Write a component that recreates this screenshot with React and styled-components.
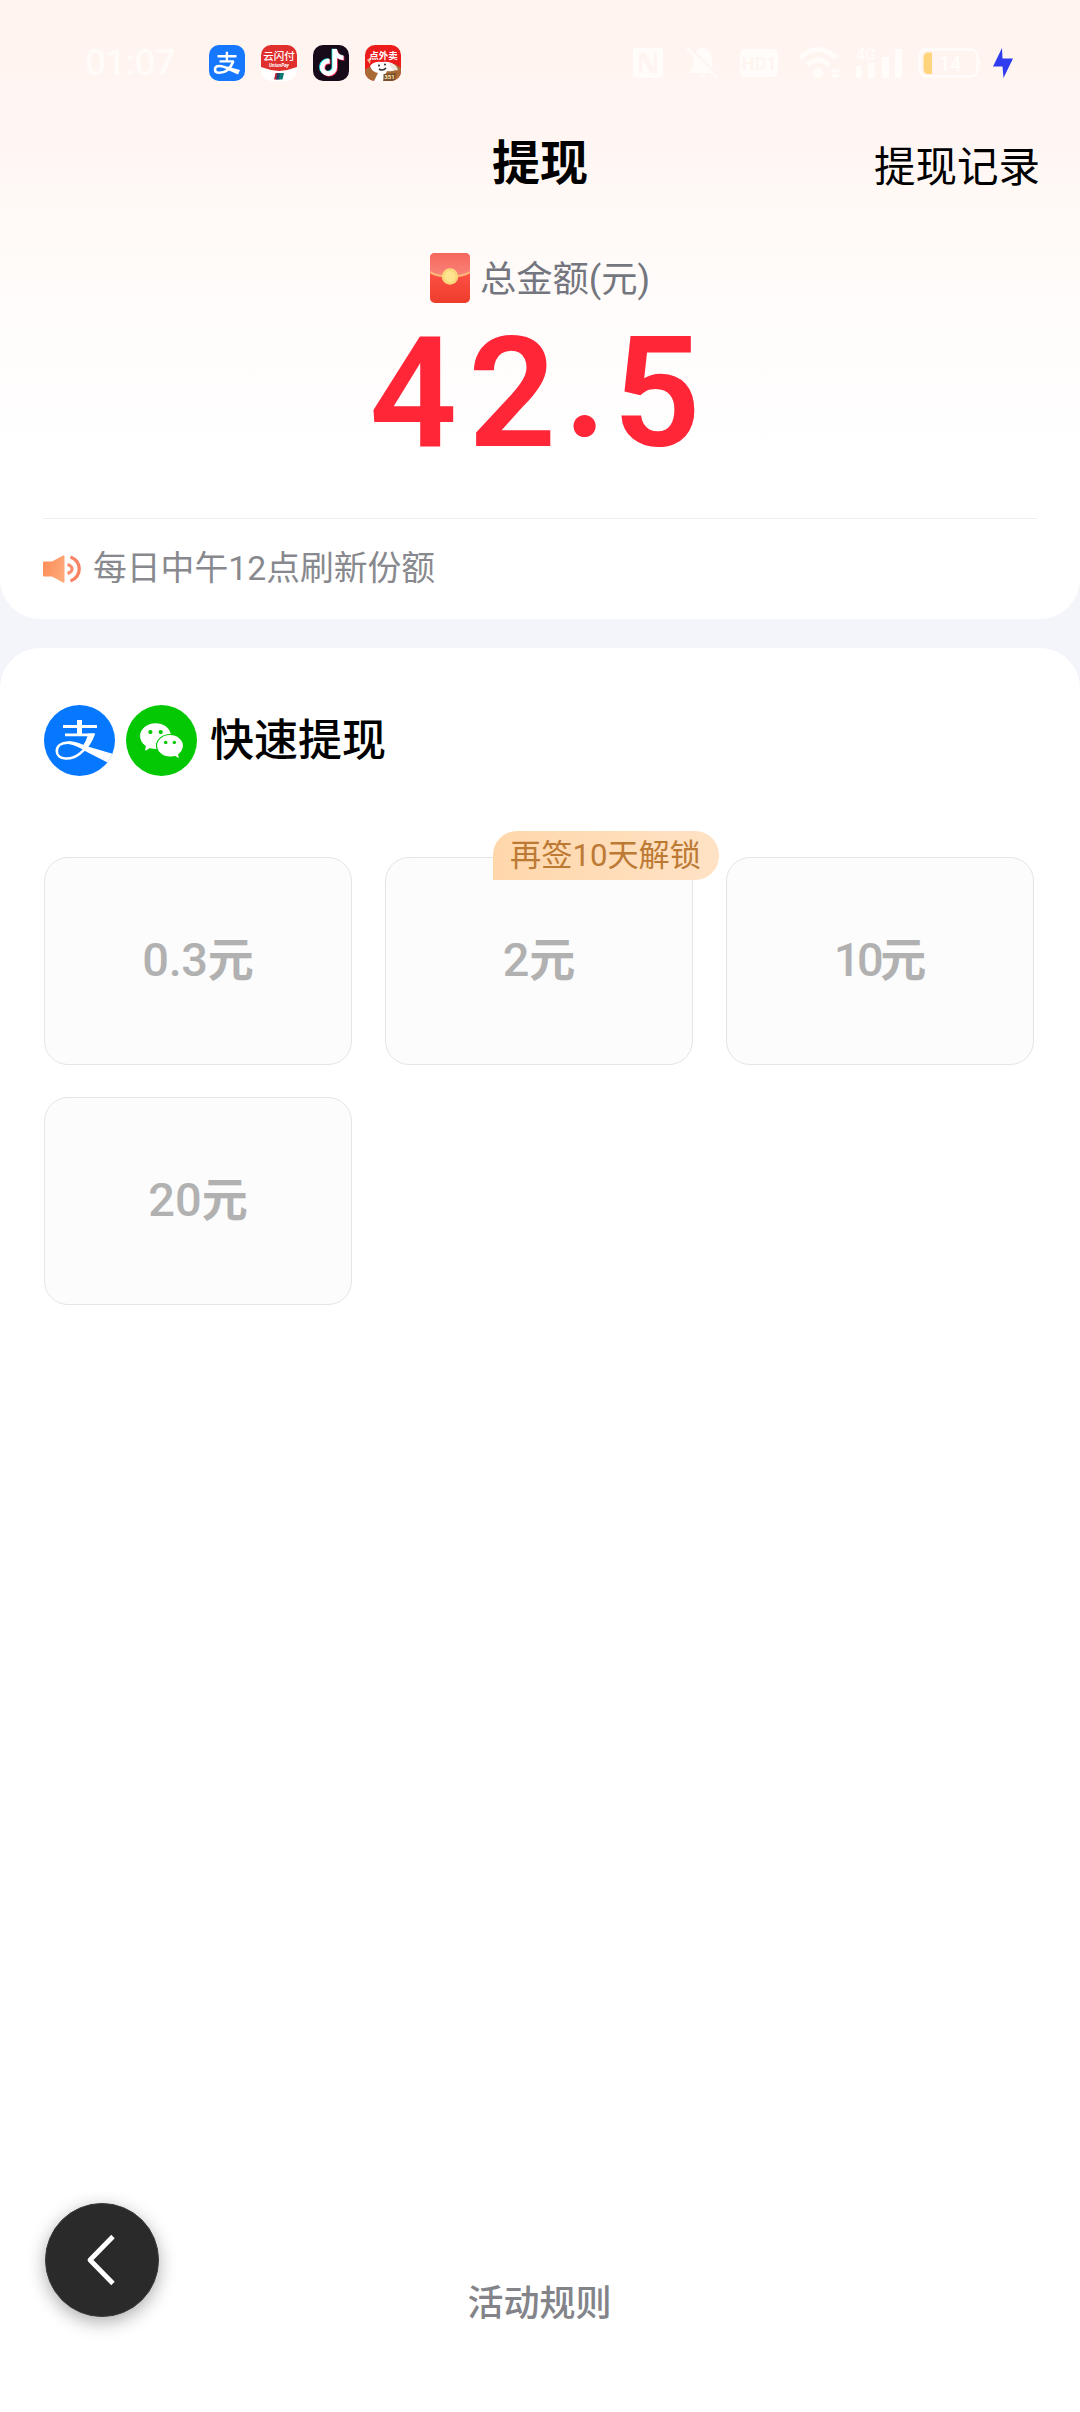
import React from "react";
import styled, { createGlobalStyle } from "styled-components";
import { AiFillWechat } from "react-icons/ai";
import { FaTiktok } from "react-icons/fa";

const GlobalStyle = createGlobalStyle`
  * { box-sizing: border-box; }
  body {
    margin: 0;
    background: #f4f5fa;
    color: #000;
    font-family: Roboto, "Noto Sans CJK SC", sans-serif;
  }
`;

const Page = styled.div`
  display: flex;
  flex-direction: column;
  gap: 29px;
  min-height: 2412px;
`;

const Hero = styled.section`
  display: flex;
  flex-direction: column;
  height: 619px;
  border-radius: 0 0 40px 40px;
  background: linear-gradient(180deg, #fff4ee 0, #fff5f2 120px, #fff9f6 200px, #fffcfb 320px, #fff 460px);
`;

const StatusBar = styled.div`
  display: flex;
  align-items: center;
  justify-content: space-between;
  height: 126px;
  padding: 0 67px 0 85px;
`;

const StatusGroup = styled.div`
  display: flex;
  align-items: center;
  gap: ${(p) => p.$gap}px;
`;

const Clock = styled.span`
  width: 108px;
  font-size: 37px;
  line-height: 44px;
  font-weight: 500;
  letter-spacing: -0.8px;
  color: #fffbf9;
`;

const AppTile = styled.span`
  display: flex;
  align-items: center;
  justify-content: center;
  width: 36px;
  height: 36px;
  border-radius: 10px;
  overflow: hidden;
  background: ${(p) => p.$bg};
`;

const Glyph = styled.svg`
  display: block;
  flex: none;
  margin-left: ${(p) => p.$ml || 0}px;
`;

const NavBar = styled.header`
  display: grid;
  grid-template-columns: 1fr auto 1fr;
  align-items: center;
  height: 76px;
  padding: 0 40px;
`;

const Title = styled.h1`
  grid-column: 2;
  margin: 0;
  font-size: 48px;
  line-height: 60px;
  font-weight: 700;
`;

const RecordLink = styled.a`
  justify-self: end;
  padding-top: 8px;
  font-size: 41.5px;
  line-height: 50px;
`;

const TotalLabel = styled.div`
  display: flex;
  align-items: center;
  justify-content: center;
  gap: 10px;
  height: 50px;
  margin-top: 51px;
  font-size: 36.3px;
  line-height: 50px;
  color: #74767f;
`;

const LabelText = styled.span`
  padding-top: 4px;
`;

const Amount = styled.div`
  height: 176px;
  padding: 3px 0 0 1px;
  text-align: center;
  font-size: 154px;
  line-height: 176px;
  font-weight: 600;
  letter-spacing: 11px;
  color: #ff2638;
`;

const Point = styled.span`
  font-family: Lato, sans-serif;
  font-size: 146px;
  font-weight: 700;
  vertical-align: 10px;
  line-height: 0;
`;

const Notice = styled.div`
  display: flex;
  align-items: center;
  gap: 12px;
  height: 101px;
  margin: 39px 43px 0;
  border-top: 1px solid #efeff1;
  font-size: 33.8px;
  line-height: 44px;
  color: #88898e;
`;

const Panel = styled.main`
  display: flex;
  flex: 1;
  flex-direction: column;
  padding: 57px 44px 86px;
  border-radius: 40px 40px 0 0;
  background: #fff;
`;

const MethodRow = styled.div`
  display: flex;
  align-items: center;
  gap: 11px;
  height: 71px;
`;

const RoundIcon = styled.span`
  display: flex;
  align-items: center;
  justify-content: center;
  width: 71px;
  height: 71px;
  border-radius: 50%;
  overflow: hidden;
  color: #fff;
  background: ${(p) => p.$bg};
`;

const MethodTitle = styled.h2`
  margin: 0 0 0 2px;
  font-size: 44px;
  line-height: 60px;
  font-weight: 500;
`;

const OptionGrid = styled.div`
  display: grid;
  grid-template-columns: repeat(3, 308px);
  grid-auto-rows: 208px;
  gap: 32px 33px;
  margin-top: 81px;
`;

const Option = styled.div`
  position: relative;
  display: flex;
  align-items: center;
  justify-content: center;
  padding-bottom: 2px;
  border: 1px solid #e5e5e6;
  border-radius: 24px;
  background: #fcfcfc;
  font-size: 47px;
  line-height: 60px;
  font-weight: 500;
  letter-spacing: ${(p) => p.$spacing}px;
  color: #b1b1b1;
`;

const Unit = styled.span`
  font-size: 46px;
  font-weight: 700;
  letter-spacing: 0;
`;

const Badge = styled.span`
  position: absolute;
  top: -27px;
  left: 107px;
  height: 49px;
  padding: 0 18px 0 17px;
  border-radius: 24px 24px 24px 0;
  background: linear-gradient(90deg, #ffd7ab, #ffe2c5);
  font-size: 31.2px;
  line-height: 50px;
  font-weight: 400;
  letter-spacing: 0;
  white-space: nowrap;
  color: #bd7a34;
`;

const RulesLink = styled.a`
  margin-top: auto;
  padding-right: 1px;
  text-align: center;
  font-size: 36px;
  line-height: 44px;
  font-weight: 500;
  color: #82848a;
`;

const BackButton = styled.button`
  position: fixed;
  left: 45px;
  bottom: 95px;
  display: flex;
  align-items: center;
  justify-content: center;
  width: 114px;
  height: 114px;
  padding: 0 2px 0 0;
  border: 1px solid #3a3a3a;
  border-radius: 50%;
  background: #2a2a2a;
  box-shadow: 0 5px 18px rgba(0, 0, 0, 0.32);
`;

const options = [
  { value: "0.3", spacing: -0.4 },
  { value: "2", badge: "再签10天解锁", spacing: 0 },
  { value: "10", spacing: -3.5 },
  { value: "20", spacing: 0 },
];

const faint = "#fffcfa";

function AppIcons() {
  return (
    <StatusGroup $gap={16}>
      <Clock>01:07</Clock>
      <AppTile $bg="#1677ff">
        <svg width="36" height="36" viewBox="0 0 36 36" fill="none" stroke="#fff">
          <path d="M8.5 11.3H27.5M17.9 6.8V16M10.5 16.4H25" strokeWidth="2.4" />
          <path d="M24.400 16.200C22.500 21 18 27.800 10.500 27.800C4.500 27.800 4.600 21.200 10.200 21C13.500 20.900 18 22.800 22 24.500" strokeWidth="2.600" />
          <path d="M18 21.500L31 25L29 29.500L20 25.500Z" fill="#fff" stroke="none" />
        </svg>
      </AppTile>
      <AppTile $bg="#fff">
        <svg width="36" height="36" viewBox="0 0 36 36">
          <path d="M0 0H36V22Q27 25.500 18 26Q9 25.500 0 22Z" fill="#e0302e" />
          <text x="18" y="15" fontSize="10.500" fontWeight="500" textAnchor="middle" fill="#fff">云闪付</text>
          <text x="18" y="21.500" fontSize="4.800" fontStyle="italic" fontWeight="700" textAnchor="middle" fill="#fff">UnionPay</text>
          <path d="M14.500 28H18L16.500 34.500H13Z" fill="#b3263a" />
          <path d="M16.500 28H20L18.500 34.500H15Z" fill="#1b4468" />
          <path d="M19 28H23L21.500 34.500H17.500Z" fill="#087b74" />
        </svg>
      </AppTile>
      <AppTile $bg="#170b1a">
        <svg width="36" height="36" viewBox="0 0 36 36">
          <FaTiktok x="4.400" y="3.500" size={27} color="#25f4ee" />
          <FaTiktok x="6" y="4.700" size={27} color="#fe2c55" />
          <FaTiktok x="5.200" y="4" size={27} color="#fff" />
        </svg>
      </AppTile>
      <AppTile $bg="#ec1c1c">
        <svg width="36" height="36" viewBox="0 0 36 36">
          <path d="M0 25Q6 20 14 21L30 19L36 23V36H0Z" fill="#a96a35" />
          <path d="M2 15L6 12L5 19Z" fill="#f4b98c" />
          <path d="M5 21Q9 16 17 17Q28 15 32 24Q28 27 22 26L20 30L18 36H9L13 28Q7 27 5 21Z" fill="#fff" />
          <path d="M24 18Q31 18 33 25Q27 27 24 18Z" fill="#efe6dc" />
          <circle cx="14" cy="20.500" r="1" fill="#222" />
          <circle cx="20" cy="19.500" r="1" fill="#222" />
          <path d="M14 24Q18 26.500 21 23" fill="none" stroke="#333" strokeWidth="1.600" />
          <path d="M18.500 29L31 28L30 36H18.500Z" fill="#76502f" />
          <text x="24.500" y="34.300" fontSize="6" fontWeight="700" textAnchor="middle" fill="#ffe9b0">351</text>
          <text x="18.500" y="13.500" fontSize="9.500" fontWeight="700" textAnchor="middle" fill="#fff">点外卖</text>
        </svg>
      </AppTile>
    </StatusGroup>
  );
}

function SystemIcons() {
  return (
    <StatusGroup $gap={0}>
      <Glyph width="30" height="30" viewBox="0 0 30 30">
        <path fillRule="evenodd" fill={faint} d="M2 0H28Q30 0 30 2V28Q30 30 28 30H2Q0 30 0 28V2Q0 0 2 0ZM6 5V25H9V10L18 25H24V5H21V20L12 5Z" />
      </Glyph>
      <Glyph $ml={23} width="34" height="32" viewBox="0 0 34 32">
        <path fill={faint} d="M16 0Q26 3 26 14V20L31 26H3L7 20V12Q8 4 16 0ZM13 28H20Q17 32 13 28Z" />
        <path d="M3 0L33 30" stroke="#fff5f0" strokeWidth="3" />
        <path d="M1 1L31 31" stroke={faint} strokeWidth="2.400" />
      </Glyph>
      <Glyph $ml={20} width="38" height="30" viewBox="0 0 38 30">
        <rect width="38" height="28" y="1" rx="5" fill={faint} />
        <text x="19" y="22" fontSize="18" fontWeight="500" textAnchor="middle" fill="#fff4ee">HD1</text>
      </Glyph>
      <Glyph $ml={20} width="44" height="34" viewBox="0 0 44 34" fill="none" stroke={faint} strokeWidth="4.600">
        <path d="M2 12Q20-5 38 12M9 19Q20 9 31 19" />
        <circle cx="20" cy="27" r="5" fill={faint} stroke="none" />
        <path d="M34 25H41M34 30H41" strokeWidth="3.600" />
      </Glyph>
      <Glyph $ml={13} width="48" height="42" viewBox="0 -4 48 42" fill={faint}>
        <path d="M1 20H7V32H1ZM13 17H20V32H13ZM27 11H34V32H27ZM40 3H47V32H40Z" />
        <text x="1" y="14" fontSize="16" fontWeight="500">4G</text>
      </Glyph>
      <Glyph $ml={15} width="64" height="32" viewBox="0 0 64 32">
        <rect x="1.500" y="2.500" width="58" height="27" rx="7" fill="none" stroke={faint} strokeWidth="2.400" />
        <path d="M61 12Q64 16 61 20Z" fill={faint} />
        <path d="M14 5.500V27H10Q5.500 27 5.500 22V11Q5.500 5.500 10 5.500Z" fill="#ffd47c" />
        <text x="32" y="23.500" fontSize="20" fontWeight="500" textAnchor="middle" fill={faint}>14</text>
      </Glyph>
      <Glyph $ml={11} width="20" height="30" viewBox="0 0 20 30">
        <path d="M9 0L0 18.500H9.500L10.500 30L20 10.500H9.500Z" fill="#2f3cf0" />
      </Glyph>
    </StatusGroup>
  );
}

function RedPacket() {
  return (
    <svg width="40" height="50" viewBox="0 0 40 50">
      <defs>
        <linearGradient id="packet" x1="0" y1="0" x2="0" y2="1">
          <stop offset="0.400" stopColor="#fc5145" />
          <stop offset="1" stopColor="#ee3c2b" />
        </linearGradient>
        <linearGradient id="flap" x1="0" y1="0" x2="0" y2="1">
          <stop offset="0" stopColor="#f6665c" />
          <stop offset="1" stopColor="#f9857a" />
        </linearGradient>
      </defs>
      <rect width="40" height="50" rx="5" fill="url(#packet)" />
      <path d="M5 0H35Q40 0 40 5V19Q33 24 20 24Q7 24 0 19V5Q0 0 5 0Z" fill="url(#flap)" />
      <path d="M0 19Q7 23.500 20 23.500Q33 23.500 40 19" fill="none" stroke="#fdbb79" strokeWidth="2" />
      <circle cx="20" cy="23.500" r="8.200" fill="#fbd77c" />
      <circle cx="20" cy="23.500" r="5.500" fill="#ffe38e" />
    </svg>
  );
}

function Speaker() {
  return (
    <svg width="38" height="28" viewBox="0 0 38 28">
      <defs>
        <linearGradient id="horn" x1="0" y1="0" x2="1" y2="0.400">
          <stop offset="0" stopColor="#fb8a55" />
          <stop offset="1" stopColor="#fda878" />
        </linearGradient>
      </defs>
      <path d="M1 6.500H9L20 0.500Q21.500 0 21.500 1.500V26.500Q21.500 28 20 27.500L9 21.500H1Q0 21.500 0 20.500V7.500Q0 6.500 1 6.500Z" fill="url(#horn)" />
      <path d="M24.500 9.500Q29 11 29 14Q29 17 24.500 18.500" fill="none" stroke="#fb9070" strokeWidth="3.200" />
      <path d="M27.500 2Q36.200 5.500 36.200 14Q36.200 22.500 27.500 26" fill="none" stroke="#f98363" strokeWidth="3.300" />
    </svg>
  );
}

function AlipayMark() {
  return (
    <svg width="71" height="71" viewBox="0 0 71 71" fill="none" stroke="#fff">
      <path d="M19 21.500H53" strokeWidth="3.200" />
      <path d="M35.500 15V30" strokeWidth="5" />
      <path d="M21 29.800H48" strokeWidth="2.800" />
      <path d="M50 28.400C47 37 42 44 36 48.500C31 52.500 26 53.800 21.500 53.500C16 53.200 12.800 50.200 12.800 46C12.800 41 17 37.600 24 37.600C30 37.600 38 41.500 44 44.500" strokeWidth="2.600" />
      <path d="M44.500 28.400H50Q47 38 40 45L37.500 43Q42 37 44.500 28.400Z" fill="#fff" stroke="none" />
      <path d="M24 36.400C31 36 36 38.500 42 41L71 49.500L63.500 57.500L42 46.500C35 42 29 39.500 24 38.800Z" fill="#fff" stroke="none" />
    </svg>
  );
}

export default function App() {
  return (
    <Page>
      <GlobalStyle />
      <Hero>
        <StatusBar>
          <AppIcons />
          <SystemIcons />
        </StatusBar>
        <NavBar>
          <Title>提现</Title>
          <RecordLink>提现记录</RecordLink>
        </NavBar>
        <TotalLabel>
          <RedPacket />
          <LabelText>总金额(元)</LabelText>
        </TotalLabel>
        <Amount>
          42<Point>.</Point>5
        </Amount>
        <Notice>
          <Speaker />
          <span>每日中午12点刷新份额</span>
        </Notice>
      </Hero>
      <Panel>
        <MethodRow>
          <RoundIcon $bg="#0678ff">
            <AlipayMark />
          </RoundIcon>
          <RoundIcon $bg="#05c805">
            <AiFillWechat size={49} />
          </RoundIcon>
          <MethodTitle>快速提现</MethodTitle>
        </MethodRow>
        <OptionGrid>
          {options.map((o) => (
            <Option key={o.value} $spacing={o.spacing}>
              <span>
                {o.value}
                <Unit>元</Unit>
              </span>
              {o.badge && <Badge>{o.badge}</Badge>}
            </Option>
          ))}
        </OptionGrid>
        <RulesLink>活动规则</RulesLink>
      </Panel>
      <BackButton aria-label="返回">
        <svg width="30" height="52" viewBox="0 0 30 52" fill="none" stroke="#fff" strokeWidth="4.800">
          <path d="M27 2.500L4 26L27 49.500" strokeLinejoin="round" />
        </svg>
      </BackButton>
    </Page>
  );
}
